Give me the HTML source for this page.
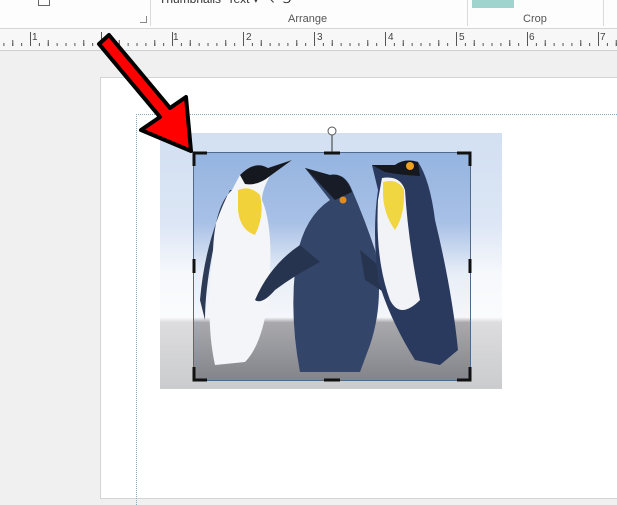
<!DOCTYPE html>
<html><head><meta charset="utf-8"><style>
body{margin:0;width:617px;height:493px;overflow:hidden;background:#f0f0f0;font-family:"Liberation Sans",sans-serif;position:relative}
.a{position:absolute}
</style></head><body>
<div class="a" style="left:0;top:0;width:617px;height:28px;background:#fdfdfd;border-bottom:1px solid #d6d6d6"></div>
<div class="a" style="left:150px;top:0;width:1px;height:26px;background:#dadada"></div>
<div class="a" style="left:467px;top:0;width:1px;height:26px;background:#dadada"></div>
<div class="a" style="left:603px;top:0;width:1px;height:26px;background:#dadada"></div>
<div class="a" style="left:472px;top:0;width:42px;height:8px;background:#9fd3cd"></div>
<div class="a" style="left:38px;top:0;width:10px;height:5px;border:1px solid #666;border-top:none"></div>
<div class="a" style="left:159px;top:-8px;font-size:12px;color:#333">Thumbnails&nbsp; Text ▾&nbsp; ↖&nbsp; ⅁</div>
<div class="a" style="left:288px;top:13px;font-size:11px;color:#555">Arrange</div>
<div class="a" style="left:523px;top:13px;font-size:11px;color:#555">Crop</div>
<div class="a" style="left:140px;top:16px;width:6px;height:6px;border-right:1px solid #888;border-bottom:1px solid #888"></div>
<svg class="a" style="left:0;top:29px" width="617" height="22">
<rect width="617" height="22" fill="#f7f7f7"/>
<line x1="3.4" x2="617" y1="15.5" y2="15.5" stroke="#555" stroke-width="3" stroke-dasharray="1 7.875"/>
<line x1="12.25" x2="617" y1="14" y2="14" stroke="#555" stroke-width="6" stroke-dasharray="1 34.5"/>
<line x1="30" x2="617" y1="10" y2="10" stroke="#555" stroke-width="14" stroke-dasharray="1 70"/>
<g font-size="10" fill="#444"><text x="32" y="11">1</text><text x="173" y="11">1</text><text x="246" y="11">2</text><text x="317" y="11">3</text><text x="388" y="11">4</text><text x="459" y="11">5</text><text x="529" y="11">6</text><text x="600" y="11">7</text></g>
<line x1="0" x2="617" y1="21.5" y2="21.5" stroke="#d0d0d0"/>
</svg>
<div class="a" style="left:100px;top:77px;width:520px;height:420px;background:#fff;border:1px solid #d4d4d4"></div>
<div class="a" style="left:136px;top:114px;width:490px;height:390px;border-left:1px dotted #8ab;border-top:1px dotted #8ab"></div>
<svg class="a" style="left:0;top:0" width="617" height="493">
<defs>
<linearGradient id="sky" x1="0" y1="133" x2="0" y2="389" gradientUnits="userSpaceOnUse">
<stop offset="0" stop-color="#8fb1de"/><stop offset=".35" stop-color="#a8c0e6"/><stop offset=".55" stop-color="#e8eef7"/><stop offset=".72" stop-color="#f4f6fa"/><stop offset=".74" stop-color="#a9a9ad"/><stop offset="1" stop-color="#7d7f84"/></linearGradient>
<clipPath id="c"><rect x="193" y="152" width="278" height="229"/></clipPath>
<g id="p">
<rect x="160" y="133" width="342" height="256" fill="url(#sky)"/>
<path d="M240 175 Q255 160 268 168 L292 160 L270 176 Q262 190 262 200 Q275 230 268 300 Q262 345 245 362 L215 365 Q205 320 213 250 Q215 205 232 190 Z" fill="#f4f5f8"/>
<path d="M232 190 Q215 205 213 250 Q205 290 205 320 L200 300 Q205 240 230 190 Z" fill="#2c3a55"/>
<path d="M240 175 Q255 160 268 168 L292 160 L270 176 Q258 186 245 184 Z" fill="#15181f"/>
<path d="M238 190 Q250 185 260 195 Q265 215 255 235 Q240 230 238 210 Z" fill="#f2d23a"/>
<path d="M305 168 L330 175 Q345 172 352 190 Q365 220 375 250 Q385 300 370 345 L360 372 L300 372 Q290 320 295 270 Q300 220 330 200 Z" fill="#34456a"/>
<path d="M305 168 L330 175 Q345 172 352 192 L335 200 Z" fill="#171c26"/>
<path d="M300 245 Q270 265 255 300 Q262 305 275 290 Q295 275 320 262 Z" fill="#27344f"/>
<path d="M360 250 Q410 290 432 325 Q428 330 420 320 Q390 295 365 280 Z" fill="#27344f"/>
<path d="M372 165 L395 165 Q405 158 418 162 Q430 180 435 220 Q452 290 458 350 L440 365 L415 360 Q390 320 378 280 Q372 230 378 190 Z" fill="#2a3a5e"/>
<path d="M382 178 Q400 175 405 190 Q408 240 420 300 Q400 320 390 300 Q375 260 378 200 Z" fill="#f2f3f7"/>
<path d="M383 182 Q398 178 404 190 Q405 215 395 230 Q384 215 383 195 Z" fill="#f0d640"/>
<path d="M372 165 L395 165 Q405 158 418 162 L420 176 Q400 175 385 172 Z" fill="#15181f"/>
<circle cx="410" cy="166" r="4" fill="#f0a020"/><circle cx="343" cy="200" r="3.5" fill="#e08a20"/>
</g>
</defs>
<use href="#p"/>
<rect x="160" y="133" width="342" height="256" fill="#fff" opacity=".6"/>
<g clip-path="url(#c)"><use href="#p"/></g>
<rect x="193.5" y="152.5" width="277" height="228" fill="none" stroke="#506a8a" stroke-width="1"/>
<g stroke="#111" stroke-width="3" fill="none">
<path d="M194 166V153H207M457 153H470V166M194 367V380H207M457 380H470V367"/>
<path d="M324 153H340M324 380H340M194 259V273M470 259V273"/>
</g>
<line x1="332" y1="135" x2="332" y2="152" stroke="#333"/>
<circle cx="332" cy="131" r="4" fill="#fff" stroke="#555"/>
<path d="M99 44 L109 35 L170 108 L186 97 L191 151 L141 130 L160 117 Z" fill="#f00" stroke="#000" stroke-width="4" stroke-linejoin="round"/>
</svg>
</body></html>
